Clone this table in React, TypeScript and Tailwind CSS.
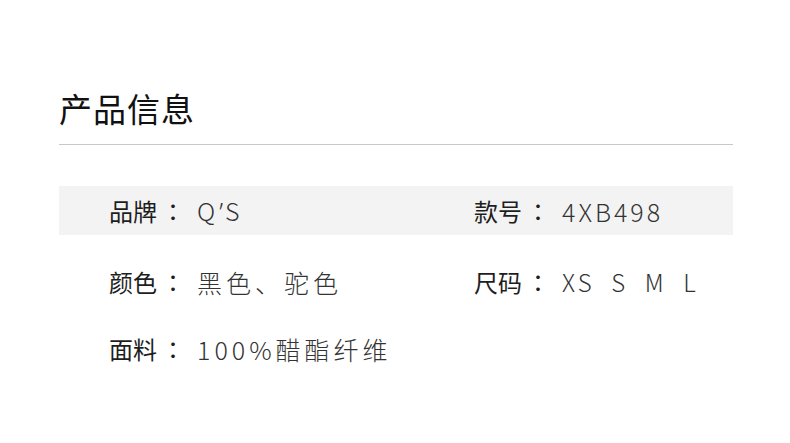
export default function App() {
  const font = { fontFamily: '"Noto Sans CJK SC", "Noto Sans", sans-serif' };
  return (
    <div className="w-[790px] h-[443px] bg-white overflow-hidden" style={font}>
      <div className="pl-[59px] pr-[57px] pt-[85px]">
        <h1 className="text-[33px] leading-[46px] text-[#111] font-normal tracking-[1px]">产品信息</h1>
        <div className="mt-[13px] h-px bg-[#c8c8c8]" />
        <div className="mt-[41px]">
          <div className="grid grid-cols-[365px_1fr] h-[49px] items-center bg-[#f3f3f3] pl-[50px]">
            <Item label="品牌" value={<>Q<span className="font-['Noto_Sans'] tracking-[2px]">’</span>S</>} />
            <Item label="款号" value="4XB498" mid />
          </div>
          <div className="grid grid-cols-[365px_1fr] h-[49px] mt-[22px] items-center pl-[50px]">
            <Item label="颜色" value="黑色、驼色" />
            <Item label="尺码" value="XS  S  M  L" narrow />
          </div>
          <div className="grid grid-cols-[365px_1fr] h-[49px] mt-[18px] items-center pl-[50px]">
            <Item label="面料" value="100%醋酯纤维" />
          </div>
        </div>
      </div>
    </div>
  );
}

function Item({
  label,
  value,
  narrow,
  mid,
}: {
  label: string;
  value: React.ReactNode;
  narrow?: boolean;
  mid?: boolean;
}) {
  const cls = narrow
    ? "ml-[16px] text-[24px] text-[#333] font-light tracking-[3px]"
    : mid
    ? "ml-[16px] text-[25px] text-[#333] font-light tracking-[3px]"
    : "ml-[16px] text-[25px] text-[#333] font-light tracking-[4px]";
  return (
    <div className="flex items-center leading-[32px] whitespace-pre">
      <span className="text-[24px] text-[#1e1e1e] font-normal">
        {label}
        <span className="inline-block w-[24px] pl-[4px] text-center font-['Noto_Sans_CJK_TC']">：</span>
      </span>
      <span className={cls}>{value}</span>
    </div>
  );
}
